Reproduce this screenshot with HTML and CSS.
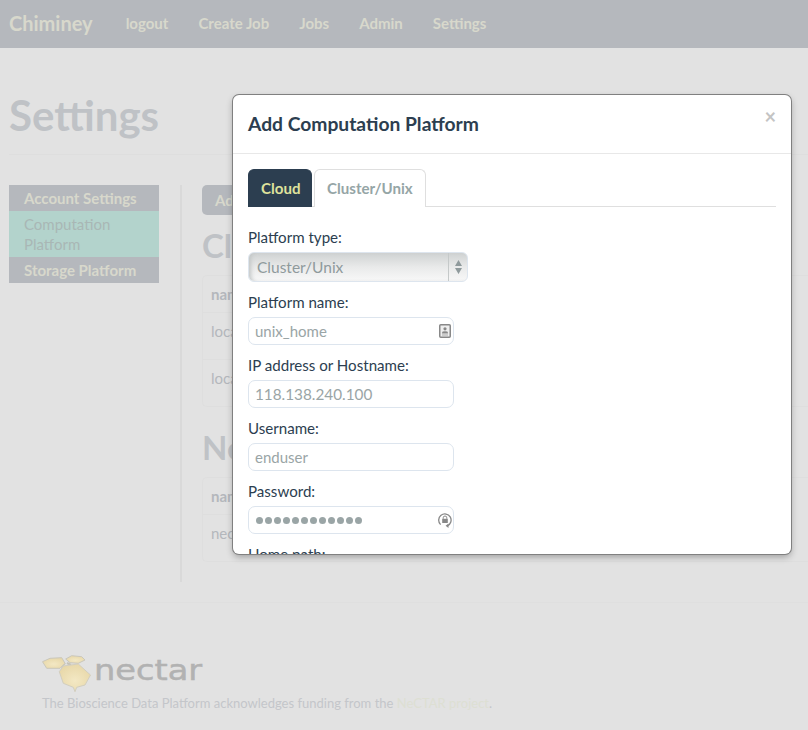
FILE: index.html
```html
<!DOCTYPE html>
<html>
<head>
  <title>Chiminey - Settings</title>
  <link rel="stylesheet" href="styles.css">
</head>
<body>

<div class="navbar">
  <a class="brand">Chiminey</a>
  <a class="nav-link">logout</a>
  <a class="nav-link">Create Job</a>
  <a class="nav-link">Jobs</a>
  <a class="nav-link">Admin</a>
  <a class="nav-link">Settings</a>
</div>

<div class="page-head">
  <h1>Settings</h1>
</div>

<div class="main">
  <div class="side">
    <div class="side-item">Account Settings</div>
    <div class="side-item active">Computation Platform</div>
    <div class="side-item">Storage Platform</div>
  </div>
  <div class="content">
    <!-- the rest of these texts sits under the dialog -->
    <button class="add-btn">Ad</button>
    <h2>Cl</h2>
    <div class="tbl">
      <div class="tbl-head">nam</div>
      <div class="tbl-row">loca</div>
      <div class="tbl-row">loca</div>
    </div>
    <h2 class="second">Ne</h2>
    <div class="tbl">
      <div class="tbl-head">nam</div>
      <div class="tbl-row">nec</div>
    </div>
  </div>
</div>

<div class="footer">
  <div class="logo">
    <svg width="49" height="38" viewBox="0 0 49 38">
      <defs>
        <radialGradient id="honey" cx="0.5" cy="0.6" r="0.7">
          <stop offset="0" stop-color="#f3e8c4"/>
          <stop offset="1" stop-color="#e6d5a4"/>
        </radialGradient>
      </defs>
      <path d="M19 12 L23 8 M25 8 L29 10" stroke="#c4c2b8" stroke-width="2"/>
      <path d="M0.5 6.7 L8 3.3 L19.7 2.7 L23 8.3 L18 13.3 L4.7 13.3 Z" fill="url(#honey)" stroke="#cac7bb"/>
      <path d="M23.7 4 L29.7 0.7 L39.7 1.7 L43 5 L36.3 8.3 L28 7.7 Z" fill="url(#honey)" stroke="#cac7bb"/>
      <path d="M21.3 11 L36.3 9 L48.5 20 L43 30 L34.7 32.3 L33 36.7 L31.3 32.3 L21.3 28.3 L17.3 16.7 Z" fill="url(#honey)" stroke="#d2cebf"/>
    </svg>
    <span class="logo-word">nectar</span>
  </div>
  <p>The Bioscience Data Platform acknowledges funding from the <a>NeCTAR project</a>.</p>
</div>

<div class="modal">
  <div class="modal-header">
    <h3>Add Computation Platform</h3>
    <span class="close">&times;</span>
  </div>
  <div class="modal-body">
    <div class="tabs">
      <div class="tab current">Cloud</div>
      <div class="tab">Cluster/Unix</div>
    </div>
    <label>Platform type:</label>
    <div class="select">
      <span>Cluster/Unix</span>
      <span class="arrows">
        <svg width="9" height="16" viewBox="0 0 9 16"><path d="M4.5 1 L8 7 L1 7 Z M4.5 15 L8 9 L1 9 Z" fill="#8f9a9c"/></svg>
      </span>
    </div>
    <label>Platform name:</label>
    <div class="field">
      <span>unix_home</span>
      <svg width="12" height="14" viewBox="0 0 12 14">
        <rect x="0.75" y="0.75" width="10.5" height="12.5" rx="1" fill="#eee" stroke="#888" stroke-width="1.5"/>
        <circle cx="6" cy="4.8" r="1.6" fill="#888"/>
        <path d="M3 8.5 Q3 7.3 6 7.3 Q9 7.3 9 8.5 V9.5 H3 Z" fill="#888"/>
        <path d="M3 11 H9" stroke="#aaa"/>
      </svg>
    </div>
    <label>IP address or Hostname:</label>
    <div class="field"><span class="ip">118.138.240.100</span></div>
    <label>Username:</label>
    <div class="field"><span>enduser</span></div>
    <label>Password:</label>
    <div class="field">
      <span class="dots">
        <i></i><i></i><i></i><i></i><i></i><i></i><i></i><i></i><i></i><i></i><i></i><i></i>
      </span>
      <svg class="key" width="14" height="15" viewBox="0 0 14 15">
        <path d="M2.6 11.6 A6.2 6.2 0 1 1 9.4 12.8" fill="none" stroke="#888" stroke-width="1.3"/>
        <path d="M10.5 10.6 L7.6 12.8 L10.5 15 Z" fill="#888"/>
        <rect x="4.2" y="5.8" width="5.6" height="4.2" fill="#888"/>
        <path d="M5.2 5.8 V4.8 A1.8 1.8 0 0 1 8.8 4.8 V5.8" fill="none" stroke="#888"/>
      </svg>
    </div>
    <label>Home path:</label>
  </div>
</div>

</body>
</html>
```

FILE: styles.css
```css
body {
  margin: 0;
  height: 730px;
  overflow: hidden;
  background: #e2e2e2;
  font-family: Lato, "Open Sans", sans-serif;
  font-size: 15px;
  color: #b4b7bc;
}

.navbar {
  height: 48px;
  box-sizing: border-box;
  padding: 0 0 3px 9px;
  background: #b5b8bd;
  display: flex;
  align-items: center;
  color: #d8d8cc;
  font-weight: 700;
}

.brand {
  font-size: 20px;
  margin-right: 33px;
}

.nav-link {
  font-size: 15px;
  margin-right: 30px;
}

.page-head {
  margin: 0 0 0 9px;
  height: 107px;
  border-bottom: 1px solid #dedede;
  box-sizing: border-box;
}

h1 {
  margin: 0;
  padding-top: 41px;
  font-size: 42px;
  line-height: 52px;
  color: #bfc2c6;
}

.main {
  display: flex;
  margin: 30px 0 0 9px;
}

.side {
  width: 150px;
  height: 98px;
  margin-right: 21px;
}

.side-item {
  background: #b5b8bd;
  color: #d8d8cc;
  font-weight: 700;
  font-size: 15px;
  line-height: 20px;
  padding: 3px 15px;
}

.side-item.active {
  background: #b3d3cc;
  color: #a9b7b5;
  font-weight: 400;
}

.content {
  border-left: 2px solid #d9d9d9;
  padding-left: 20px;
  height: 397px;
  flex: 1;
}

.add-btn {
  display: block;
  width: 120px;
  height: 30px;
  border: none;
  border-radius: 5px;
  background: #b5b8bd;
  color: #d8d8cc;
  font: 700 15px Lato, sans-serif;
  text-align: left;
  padding-left: 13px;
}

h2 {
  margin: 12px 0 12px;
  font-size: 33px;
  line-height: 36px;
  color: #bfc2c6;
}

h2.second {
  margin: 22px 0 12px;
}

.tbl {
  border: 1px solid #dedede;
  border-right: none;
  border-radius: 5px 0 0 5px;
  margin-right: -20px;
}

.tbl-head {
  width: 300px;
  height: 36px;
  line-height: 36px;
  padding-left: 8px;
  font-weight: 700;
  border-bottom: 1px solid #dedede;
}

.tbl-row {
  width: 300px;
  height: 39px;
  padding: 7px 0 0 8px;
  line-height: 22px;
}

.tbl-row + .tbl-row {
  border-top: 1px solid #dedede;
}

.footer {
  margin-top: 20px;
  border-top: 1px solid #dfdfdf;
  padding: 52px 0 0 42px;
}

.footer p {
  margin: 0;
  font-size: 13px;
  line-height: 20px;
  color: #c4c6ca;
}

.footer a {
  color: #dddfd3;
}

.logo {
  display: flex;
  height: 38px;
}

.logo-word {
  font-family: "DejaVu Sans", sans-serif;
  font-size: 29px;
  line-height: 30px;
  color: #b2b2b2;
  -webkit-text-stroke: 0.5px #b2b2b2;
  margin-left: 3px;
  transform: scaleX(1.16);
  transform-origin: left center;
}

.modal {
  position: absolute;
  left: 233px;
  top: 95px;
  width: 558px;
  height: 459px;
  box-sizing: border-box;
  background: #fff;
  border-radius: 6px;
  overflow: hidden;
  box-shadow: 0 0 0 1px #808080, 0 3px 7px rgba(0, 0, 0, 0.3);
  color: #2c3e50;
}

.modal-header {
  height: 59px;
  box-sizing: border-box;
  border-bottom: 1px solid #e8e8e8;
  padding: 0 15px 2px;
  display: flex;
  align-items: center;
  justify-content: space-between;
}

h3 {
  margin: 0;
  font-size: 19.25px;
  font-weight: 700;
}

.close {
  font-size: 20px;
  font-weight: 700;
  color: #c4c4c4;
  margin-bottom: 14px;
}

.modal-body {
  padding: 15px;
}

.tabs {
  display: flex;
  height: 38px;
  box-sizing: border-box;
  border-bottom: 1px solid #dfdfdf;
  margin-bottom: 20px;
  width: 528px;
}

.tab {
  height: 38px;
  box-sizing: border-box;
  padding: 0 12px;
  line-height: 37px;
  font-weight: 700;
  font-size: 15.1px;
  color: #95a5a6;
  border: 1px solid #dfdfdf;
  border-bottom: none;
  border-radius: 6px 6px 0 0;
  background: #fff;
  margin-right: 2px;
}

.tab.current {
  width: 64px;
  background: #2c3e50;
  border-color: #2c3e50;
  color: #dfe29c;
}

label {
  display: block;
  font-size: 15.1px;
  line-height: 20px;
  margin-bottom: 5px;
}

.select {
  width: 220px;
  height: 30px;
  box-sizing: border-box;
  border: 1px solid #dde5ee;
  border-radius: 6px;
  background: linear-gradient(#cfd2d2, #e9eaea 50%, #f8f8f8);
  box-shadow: inset 4px 0 4px -2px #c2c6c6;
  display: flex;
  align-items: center;
  justify-content: space-between;
  padding-left: 8px;
  color: #8f9a9c;
  font-size: 15.5px;
  margin-bottom: 10px;
}

.arrows {
  width: 18px;
  height: 28px;
  border-left: 1px solid #c5c9c9;
  display: flex;
  align-items: center;
  justify-content: center;
}

.field {
  width: 206px;
  height: 28px;
  box-sizing: border-box;
  border: 1px solid #dde5ee;
  border-radius: 7px;
  display: flex;
  align-items: center;
  justify-content: space-between;
  padding: 0 2px 0 6px;
  color: #9aa5a6;
  font-size: 15px;
  margin-bottom: 10px;
}

.ip {
  font-size: 15.3px;
}

.key {
  margin-right: -1px;
}

.dots {
  display: flex;
  gap: 2px;
  margin-left: 1px;
}

.dots i {
  width: 7px;
  height: 7px;
  border-radius: 50%;
  background: #9aa5a6;
}
```
